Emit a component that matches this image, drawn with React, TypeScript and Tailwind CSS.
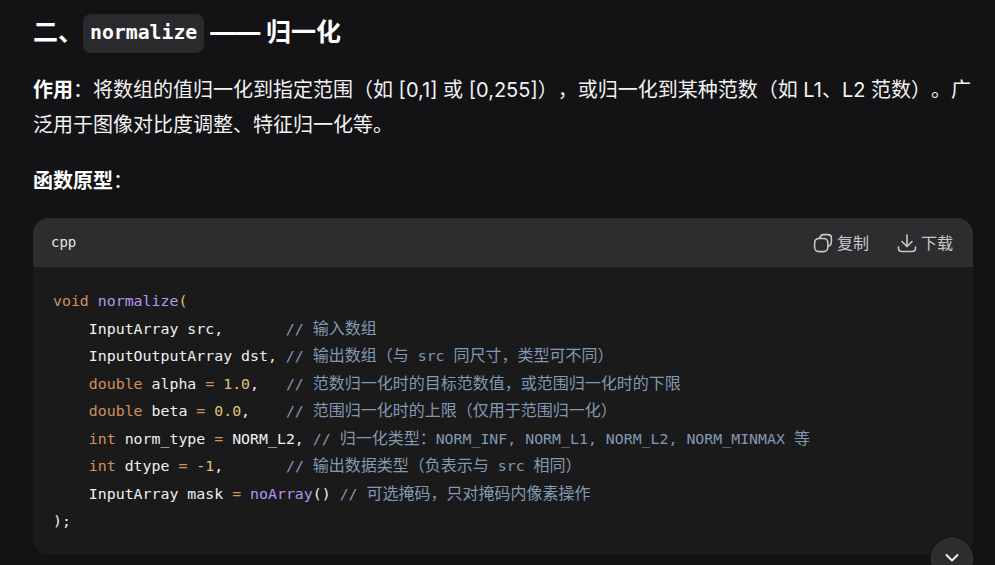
const kw = 'text-[#d0915f]';
const fn = 'text-[#b794f0]';
const num = 'text-[#e0c07a]';
const op = 'text-[#d0915f]';
const cm = 'text-[#8199b3]';

// cjk glyphs in the code block run wider than the latin mono
function Z({ children }: { children: string }) {
  return <span className="text-[16px] leading-none font-['Noto_Sans_CJK_SC',sans-serif]">{children}</span>;
}

function CopyIcon() {
  return (
    <svg width="20" height="20" viewBox="0 0 22 22" fill="none" stroke="#c9c9cc" strokeWidth="1.7" strokeLinecap="round">
      <rect x="1.8" y="6" width="14.5" height="14.5" rx="4.5" />
      <path d="M7.5 5.5 C8 3 9.5 1.8 12 1.8 H16.5 C19 1.8 20.2 3 20.2 5.5 V10 C20.2 12.5 19.2 14 17 14.5" />
    </svg>
  );
}

function DownloadIcon() {
  return (
    <svg width="20" height="20" viewBox="0 0 20 20" fill="none" stroke="#c9c9cc" strokeWidth="1.6" strokeLinecap="round" strokeLinejoin="round">
      <path d="M10 2 V13" />
      <path d="M5 8.5 L10 13.5 L15 8.5" />
      <path d="M1.5 14 V15 C1.5 17 3 18.5 5 18.5 H15 C17 18.5 18.5 17 18.5 15 V14" />
    </svg>
  );
}

export default function App() {
  return (
    <div className="relative h-[565px] w-[995px] overflow-hidden bg-[#131316] pl-[33px] pr-[22px] text-[#f2f2f2] [text-spacing-trim:space-all] font-['Inter','Noto_Sans_CJK_SC',sans-serif]">
      <h2 className="flex h-[40px] mt-[13px] items-center text-[25px] font-bold text-white">
        <span>二、</span>
        <code className="mr-[6px] flex h-[39px] items-center rounded-[8px] bg-[#2a2a2d] px-[7px] text-[19.8px] font-bold font-['DejaVu_Sans_Mono',monospace]">
          normalize
        </code>
        <span>—— 归一化</span>
      </h2>

      <p className="mt-[20px] text-[20px] leading-[35px] text-[#f2f2f2]">
        <strong className="font-bold text-white">作用</strong>：将数组的值归一化到指定范围（如 [0,1] 或 [0,255]），或归一化到某种范数（如 L1、L2 范数）。广泛用于图像对比度调整、特征归一化等。
      </p>

      <p className="mt-[21px] text-[20px] leading-[35px] text-[#f2f2f2]">
        <strong className="font-bold text-white">函数原型</strong>：
      </p>

      <div className="mt-[19px] w-[940px] overflow-hidden rounded-[16px] bg-[#1a1a1b]">
        <div className="flex h-[49px] items-center justify-between bg-[#2d2d30] pl-[18px] pr-[20px]">
          <span className="text-[14px] text-[#e6e6e6] font-['DejaVu_Sans_Mono',monospace]">cpp</span>
          <div className="flex items-center gap-[28px] text-[16px] text-[#c9c9cc]">
            <span className="flex items-center gap-[4px]"><CopyIcon />复制</span>
            <span className="flex items-center gap-[4px]"><DownloadIcon />下载</span>
          </div>
        </div>
        <pre className="h-[288px] pl-[20px] pt-[21px] text-[14.88px] leading-[27.5px] text-[#f0f0f0] font-['DejaVu_Sans_Mono','Noto_Sans_CJK_SC',monospace]">
          <div className="h-[27.5px]"><span className={kw}>void</span> <span className={fn}>normalize</span><span className={num}>(</span></div>
          <div className="h-[27.5px]">    InputArray src,       <span className={cm}>// <Z>输入数组</Z></span></div>
          <div className="h-[27.5px]">    InputOutputArray dst, <span className={cm}>// <Z>输出数组（与</Z> src <Z>同尺寸，类型可不同）</Z></span></div>
          <div className="h-[27.5px]">    <span className={kw}>double</span> alpha <span className={op}>=</span> <span className={num}>1.0</span>,   <span className={cm}>// <Z>范数归一化时的目标范数值，或范围归一化时的下限</Z></span></div>
          <div className="h-[27.5px]">    <span className={kw}>double</span> beta <span className={op}>=</span> <span className={num}>0.0</span>,    <span className={cm}>// <Z>范围归一化时的上限（仅用于范围归一化）</Z></span></div>
          <div className="h-[27.5px]">    <span className={kw}>int</span> norm_type <span className={op}>=</span> NORM_L2, <span className={cm}>// <Z>归一化类型：</Z>NORM_INF, NORM_L1, NORM_L2, NORM_MINMAX <Z>等</Z></span></div>
          <div className="h-[27.5px]">    <span className={kw}>int</span> dtype <span className={op}>=</span> <span className={num}>-1</span>,       <span className={cm}>// <Z>输出数据类型（负表示与</Z> src <Z>相同）</Z></span></div>
          <div className="h-[27.5px]">    InputArray mask <span className={op}>=</span> <span className={fn}>noArray</span>() <span className={cm}>// <Z>可选掩码，只对掩码内像素操作</Z></span></div>
          <div className="h-[27.5px]">);</div>
        </pre>
      </div>

      <button className="absolute left-[931px] top-[538px] flex h-[42px] w-[42px] justify-center rounded-full border border-[#3a3a3d] bg-[#2d2d30] pt-[14px]">
        <svg width="16" height="10" viewBox="0 0 16 10" fill="none" stroke="#f0f0f0" strokeWidth="2" strokeLinecap="round" strokeLinejoin="round">
          <path d="M2.5 2 L8 7.5 L13.5 2" />
        </svg>
      </button>
    </div>
  );
}
